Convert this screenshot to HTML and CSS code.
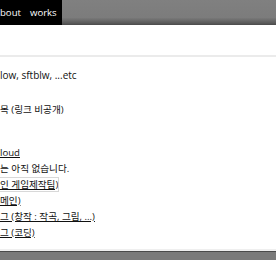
FILE: index.html
```html
<!DOCTYPE html>
<html lang="ko">
<head>
  <meta charset="UTF-8">
  <meta name="viewport" content="width=device-width, initial-scale=1.0">
  <title>sftblw</title>
  <link rel="stylesheet" href="styles.css">
</head>
<body>
  <header class="topbar">
    <nav class="nav">
      <a href="#">bout</a>
      <a href="#">works</a>
    </nav>
  </header>

  <div class="title-area"></div>

  <main class="content">
    <p>low, sftblw, ...etc</p>

    <h2>목 (링크 비공개)</h2>

    <ul class="links">
      <li><a href="#">loud</a></li>
      <li>는 아직 없습니다.</li>
      <li><a href="#" class="focused">인 게임제작팀)</a></li>
      <li><a href="#">메인)</a></li>
      <li><a href="#">그 (창작 : 작곡, 그림, ...)</a></li>
      <li><a href="#">그 (코딩)</a></li>
    </ul>
  </main>

  <footer class="footer"></footer>
</body>
</html>
```

FILE: styles.css
```css
html, body {
  margin: 0;
  padding: 0;
  overflow: hidden;
  background: #fff;
}

body {
  font-family: "Open Sans", "Noto Sans CJK KR", sans-serif;
  font-size: 10px;
  line-height: 16px;
  color: #111;
}

.topbar {
  height: 25px;
  background: linear-gradient(#808080 0, #7c7c7c 70%, #5a5a5a 92%, #4a4a4a 100%);
}

.nav {
  display: inline-flex;
  height: 25px;
  align-items: center;
  background: #000;
  padding: 1px 5px 0 0;
  box-sizing: border-box;
  gap: 9px;
}

.nav a {
  color: #fff;
  text-decoration: none;
  font-size: 9.6px;
}

.title-area {
  height: 30px;
}

.content {
  border-top: 2px solid #ebebeb;
  border-bottom: 2px solid #efefef;
  padding: 10px 0 8px 0;
}

.content p {
  margin: 0 0 19px;
}

.content h2 {
  font-size: 9.6px;
  font-weight: normal;
  margin: 0 0 27px;
}

.links {
  list-style: none;
  margin: 0;
  padding: 0;
  font-size: 9.6px;
}

.links a {
  color: #111;
}

.focused {
  outline: 1px solid #d8d8d8;
}

.footer {
  height: 20px;
  border-top: 1px solid #4a4a4a;
  background: #7a7a7a;
}
```
